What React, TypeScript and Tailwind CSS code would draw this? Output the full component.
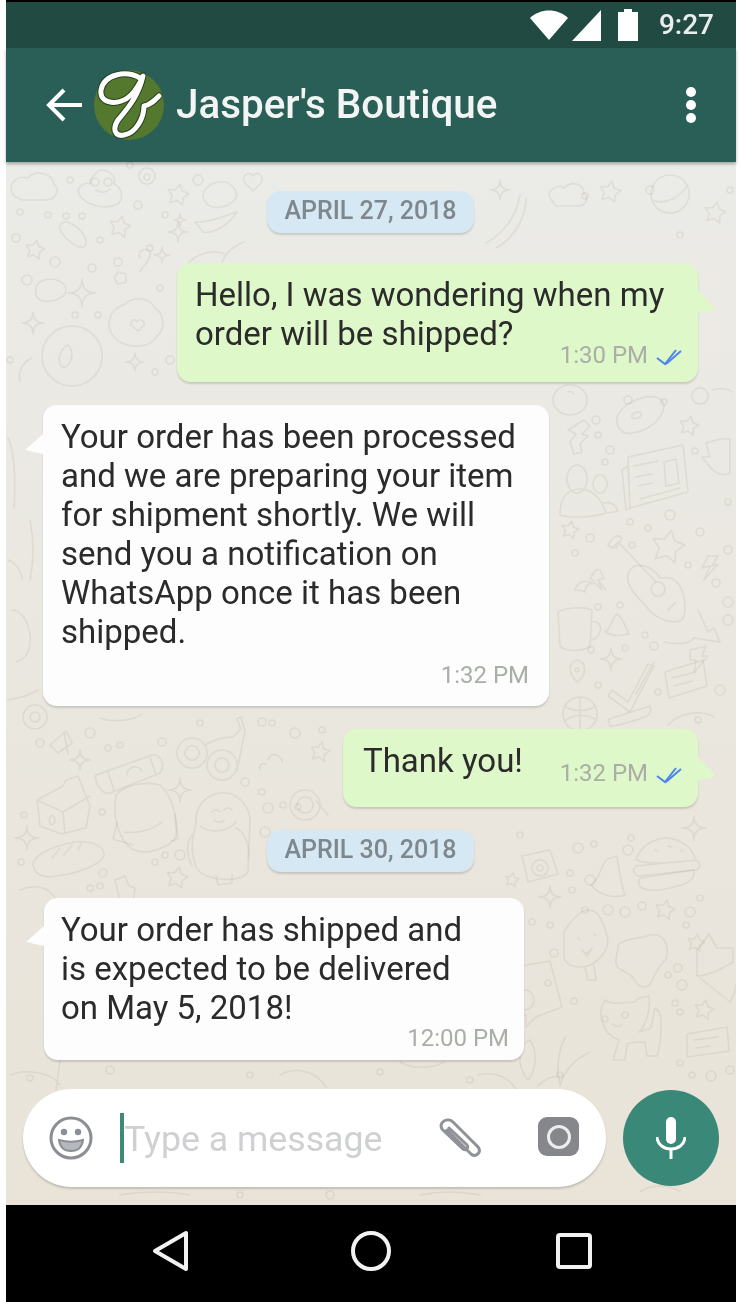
import React from "react";

const roboto = { fontFamily: "Roboto, sans-serif" };

// five pointed doodle star
const star = (cx: number, cy: number, r: number) => {
  let d = "";
  for (let i = 0; i < 10; i++) {
    const rad = i % 2 === 0 ? r : r * 0.52;
    const a = (Math.PI / 5) * i - Math.PI / 2 + 0.2;
    d += `${i === 0 ? "M" : "L"}${(cx + rad * Math.cos(a)).toFixed(1)} ${(cy + rad * Math.sin(a)).toFixed(1)}`;
  }
  return d + "z";
};

// four pointed sparkle
const sparkle = (x: number, y: number, r: number) =>
  `M${x} ${y - r}Q${x} ${y} ${x + r} ${y}Q${x} ${y} ${x} ${y + r}Q${x} ${y} ${x - r} ${y}Q${x} ${y} ${x} ${y - r}z`;

const stars: number[][] = [
  [178, 195, 11], [120, 227, 11], [35, 250, 10], [610, 192, 11], [715, 213, 11], [689, 426, 10], [668, 547, 17],
  [570, 530, 9], [320, 752, 10], [177, 878, 11], [665, 910, 10], [696, 943, 9], [704, 1010, 10], [512, 880, 7],
];

const sparkles: number[][] = [
  [178, 232, 10], [162, 255, 8], [82, 293, 14], [33, 323, 11], [135, 362, 9], [500, 190, 10], [611, 659, 11],
  [80, 760, 10], [180, 790, 12], [27, 838, 12], [550, 897, 11], [694, 828, 12], [180, 220, 6],
];

const dots: number[][] = [
  [70, 180, 3], [130, 165, 3], [198, 180, 5], [20, 212, 3], [48, 215, 3], [66, 216, 3], [16, 238, 4], [82, 216, 3],
  [138, 205, 4], [165, 215, 3], [100, 240, 3], [118, 262, 4], [55, 262, 5], [92, 268, 4], [150, 248, 3], [160, 288, 3],
  [27, 280, 5], [75, 315, 3], [98, 315, 3], [170, 360, 4], [155, 372, 3], [10, 360, 3],
  [585, 196, 3], [650, 190, 4], [680, 235, 3], [730, 190, 3], [628, 400, 4], [664, 402, 3], [598, 435, 3], [605, 462, 3],
  [596, 420, 4], [610, 450, 4], [695, 451, 3], [670, 515, 5], [630, 522, 3], [648, 528, 3], [700, 532, 4], [728, 502, 3],
  [590, 538, 4], [575, 553, 3], [632, 545, 3], [688, 565, 3], [728, 550, 4], [716, 583, 4], [728, 602, 5], [728, 620, 5],
  [620, 605, 3], [598, 607, 3], [645, 635, 3], [625, 648, 3], [654, 646, 4], [591, 650, 3], [598, 685, 3], [658, 692, 3],
  [720, 690, 5], [698, 720, 3], [40, 743, 4], [90, 733, 5], [120, 745, 3], [162, 742, 4], [200, 723, 3], [108, 748, 3],
  [262, 722, 4], [295, 733, 5], [322, 730, 3], [272, 723, 3], [245, 782, 4], [262, 792, 3], [268, 808, 5], [298, 807, 3],
  [283, 805, 3], [265, 832, 5], [24, 815, 3], [102, 812, 3], [165, 855, 3], [155, 862, 3], [103, 873, 4], [21, 862, 3],
  [180, 855, 5], [90, 888, 3], [100, 886, 3], [520, 835, 3], [578, 848, 5], [594, 844, 3], [628, 850, 5], [631, 838, 3],
  [570, 873, 3], [590, 880, 5], [572, 890, 3], [585, 910, 3], [608, 910, 5], [625, 912, 5], [642, 906, 4], [690, 912, 5],
  [686, 925, 3], [700, 898, 3], [532, 922, 3], [550, 925, 3], [554, 953, 4], [548, 983, 3], [678, 968, 4], [668, 975, 3],
  [682, 985, 5], [675, 1003, 3], [680, 1012, 3], [574, 1001, 3], [680, 1063, 3], [692, 1075, 3], [711, 1076, 5], [730, 1070, 4],
  [560, 1075, 3], [30, 1078, 3], [110, 1070, 4], [250, 1075, 3], [380, 1072, 3], [470, 1080, 3], [240, 1195, 3], [330, 1195, 4],
];

const shapes: string[] = [
  // clouds and faces along the top band
  "M14 196c-8-10 2-22 14-18 6-8 24-6 26 6 6 6 2 16-8 16H22z",
  "M80 196c-6-10 6-14 10-12 0-8 8-12 10-14 10 0 16 6 14 14 8 4 10 14 4 20-12 6-30 2-38-8z",
  "M95 178a4 4 0 1 0 .1 0zM108 178a4 4 0 1 0 .1 0zM96 190c4 3 10 3 14-1",
  "M147 168a8 8 0 1 0 .1 0zM147 174a3 3 0 1 0 .1 0z",
  "M204 200c-4-8 6-18 16-18 10-2 18 8 16 16-6 10-26 14-32 2z",
  "M253 176c4-6 12 0 8 7l-8 8-8-8c-4-7 4-13 8-7z",
  "M195 222c10 2 30-6 42-10-8 12-22 22-34 20z",
  "M184 270c6-14 26-22 40-16M222 262c4-10 12-16 22-20",
  "M550 198c-4-8 8-14 14-10 8-8 20-4 20 6 6 6 0 12-6 12h-22z",
  "M670 175a19 19 0 1 0 .1 0zM652 200c14 6 30-4 36-16",
  "M520 195c-4 22-16 38-34 48M526 198c0 20-12 40-30 50",
  // hazard cloud, flower heart, planet on the left
  "M40 282c10-6 26-2 26 8 0 8-16 14-26 10-6-4-6-14 0-18z",
  "M125 304c12-10 26-4 30 4 10 6 10 22 2 28-6 12-30 14-42 2-10-10-8-28 10-34z",
  "M137 322c2-4 8-2 7 3l-6 6-7-6c-1-5 4-7 6-3z",
  "M72 326a30 30 0 1 0 .1 0zM68 345c-8 4-12 16-6 22 8 2 14-14 6-22z",
  "M32 358c-10 4-14 14-12 24",
  "M60 225c6-8 18 2 24 10 4 8 2 14-4 12-8-2-22-14-20-22z",
  "M140 258c-4-6 6-12 10-6 2 8-8 14-10 20M118 272l8 2 0 8-8 2-4-6z",
  // donut, bubbles on the right
  "M617 423c-2-12 12-22 28-26 14-2 22 4 18 14-4 12-18 20-30 22-8 2-14-2-16-10zM638 412a5 3 -20 1 0 .1 0z",
  "M570 385a17 15 0 1 0 .1 0zM568 392c2-2 4 0 6 2",
  "M568 430l16-10 6 6-8 8 6 2-8 8 2 8-8 2-4-12 6-8z",
  "M712 390c6-2 16-2 20 2M700 388a8 8 0 1 0 .1 0z",
  // newspaper
  "M628 457l55-12 5 47-58 16zM622 470l6-4 2 42-4 2z",
  "M634 466l24-5M636 477l16-3M638 486l14-3M640 499l40-11M664 462l12-3 3 24-13 3z",
  // pair of balloon people, guitar
  "M577 465a10 14 0 1 0 .1 0zM560 515c0-18 8-26 20-26 12 0 22 10 26 24-12 4-34 6-46 2zM600 475a7 9 0 1 0 .1 0zM604 503c6-2 12 2 14 8l-10 2",
  "M706 443l14-4 10 0 0 34c-8 4-14 0-20-6l-8-10 8 0z",
  "M612 548l6-6 38 40M608 546c2-6 8-14 14-8l-6 10z",
  "M630 570c8-10 24-2 30 8 10-2 18 2 22 12 4 12 4 24 0 30-12 6-30-4-36-14-10-10-24-24-16-36zM658 582a7 7 0 1 0 .1 0zM668 610l8-8",
  "M698 610l10 22 6-4 6 14-26-4c-6 8-20 6-30 4",
  "M708 556l-6 12 8-2-6 14 14-16-6 2 6-10z",
  "M596 570l-6 8 12 12-4-10 6-2-4-8zM598 580l8 10",
  // mug, bell, crescent, pin, basketball, check marks, card
  "M558 612c6-4 26-6 34-2l-2 36c-8 6-24 6-30 0zM592 622c6-2 10 4 8 10-2 6-6 8-10 8",
  "M575 590c2-8 12-12 18-6-4-2-8 2-8 8-4-2-8-2-10-2z",
  "M605 632c6-2 6-14 12-18 6 4 8 12 12 20-8 2-18 2-24-2z",
  "M577 660c-8 2-10 12 0 22 10-6 10-20 0-22zM577 668a2 2 0 1 0 .1 0z",
  "M580 697a17 17 0 1 0 .1 0zM564 706c10 6 22 6 32 0M580 697v34M566 720c8-6 22-6 30 0",
  "M612 690l16 12 20-38 6 2-24 46-22-16zM636 694l18-32",
  "M665 672l38-12 4 26-38 12zM672 678l24-6M674 686l18-5",
  "M690 650l16-4-4 10 6 0-14 16 2-12-6 0zM608 720c8-4 30-10 42-14 2 8-2 10-8 12-12 4-24 8-32 8z",
  "M668 725c10-12 34-16 46-8",
  // lower left scene: gear, scissors, glasses, carton, backpack, astronaut, bread
  "M35 705a12 12 0 1 0 .1 0zM35 712a5 5 0 1 0 .1 0z",
  "M50 745l16-14 6 12-14 10zM64 732l4 22",
  "M100 718c10 4 32 4 42-4",
  "M192 738a15 15 0 1 0 .1 0zM192 746a7 7 0 1 0 .1 0zM222 750a15 15 0 1 0 .1 0zM222 758a7 7 0 1 0 .1 0zM205 745c10-6 20-8 28-8l8-8-4-10 4-2 4 14-8 40",
  "M37 800l26-14 3-6 12-4 12 30-4 22-24 6-22-8zM37 800l26 12 27-16M63 812l2 22M52 815c-3 3-4 8 0 10 5-2 3-8 0-10z",
  "M96 775l56-20c8-2 14 10 8 18l-50 20c-8 2-16-10-14-18zM108 772l6 18M150 757l6 18",
  "M116 795c8-10 30-14 44-10 12 10 18 34 16 52-6 10-30 20-44 12-14-10-20-34-16-54z",
  "M124 832c12 2 28-2 38-10M133 845l-20-6 4-16M175 815l3 24-6 2M127 775a8 8 0 0 1 15-4",
  "M220 793c16-2 30 12 30 28l-2 50c-4 12-44 12-52-4-6-16-4-30 0-42-2-16 8-30 24-32z",
  "M200 826c10 8 28 6 36-4M212 812c3-3 6-3 8 0M224 810c3-3 6-3 8 0M214 820c3 3 8 3 10 0",
  "M216 875l2 10 14-2 0-8M192 835c-6 8-6 20 0 30M236 828c10 4 14 20 12 30",
  "M34 868c-6-12 20-22 40-26 16-2 32 4 30 14-4 10-30 18-48 20-10 2-20 0-22-8zM52 858l8-10M64 855l8-10M78 850l4-8",
  "M268 760c4-10 14-4 14 2M260 770c-2-4 2-8 6-6M305 790a15 15 0 1 0 .1 0zM305 797a8 8 0 1 0 .1 0zM316 801l12 14",
  "M115 880l10-4 4 10 6 2-2 14-12 2zM20 890c14-6 30-4 36 10",
  // lower right: camera, bell, burger, popsicle, blob, cat, cupcake, plant
  "M522 856l28-6 8 24-30 8zM540 860a8 8 0 1 0 .1 0zM540 865a3 3 0 1 0 .1 0z",
  "M591 885c8-4 10-20 16-26 6 0 6-4 10-2 2 10 4 28 8 38-12 4-26 0-34-10z",
  "M636 860c4-14 18-22 32-22 14 2 24 10 28 22-20 2-44 6-60 0zM636 866l60-6c6 4 4 10-2 10l-54 6c-6 0-8-6-4-10z",
  "M640 878l54-8c2 10-8 14-16 16-12 4-28 6-36 2-4-2-4-6-2-10zM655 850l3 1M668 846l3 1M680 850l3 1",
  "M564 932c6-10 16-22 24-22 10 0 14 10 18 22 6 14-4 28-18 34-10 2-20 2-24-8zM585 968l3 12 8 0-2-14M582 950c2 4 8 4 10-2l-5 8z",
  "M578 938l2 2M594 934l2 2",
  "M618 945c8-8 24-6 32-10 14-2 20 10 16 24-6 6-10 12-14 22-6 10-14 6-18-2-4-8-20-8-18-18 0-6 2-8 2-16z",
  "M605 1000c8 6 22 2 30 2 4-6 8-4 14-6 2 16-4 30-10 36 4-2 8-2 12-4l4-20c6 4 6 10 6 16 0 16-2 26-4 32l-10 0-2-14c-8 0-14 0-18 2l-2 16-12 0 6-20c-14-4-24-24-14-40z",
  "M605 1016a3 3 0 1 0 .1 0zM625 1012a3 3 0 1 0 .1 0zM612 1024c3 3 8 3 10 0",
  "M697 950l12-16 8 14 16 0v14c-10 6-26 14-36 14zM700 978l30 24c2-4 6-10 6-18",
  "M687 1034l40-7 2 24-42 6zM694 1040l24-3M696 1048l14-2",
  "M530 1040c-12 4-14 26-2 40 8-8 10-30 2-40zM566 1036c-8 14-10 32-6 48M590 1052c-14 6-26 18-30 34M538 1086c8-8 14-10 24-10",
  "M526 965l24-4 12 46-26 10-10 10 0-12-12 2-2-46zM524 990a10 10 0 1 0 .1 0z",
  "M478 1075c16-4 30 2 38 14M60 1060l-4 30M10 1075c14-6 40-4 50 10M280 1075c14-8 34-6 46 12M400 1062c10 6 30 8 44 0",
  "M640 1192c10-8 30-8 40 0M120 1195c20-4 50-4 70 0M420 1195c20-4 40-4 60 0",
  // left margin
  "M8 438c6 10 8 40 6 70M30 520c4 20 4 40 0 60M12 610c8 0 16 10 18 24 2 14-4 26-14 28",
  "M8 700c12-2 24-6 30-10M8 560c6 2 14 10 14 20",
];

// Doodle wallpaper, coordinates are page pixels so each drawing sits where it does in the shot
const Wallpaper = () => (
  <svg className="absolute inset-0 w-full h-full" viewBox="6 162 730 1043" aria-hidden="true">
    <g fill="none" stroke="#8a8470" strokeOpacity="0.13" strokeWidth="1.6" strokeLinejoin="round" strokeLinecap="round">
      {shapes.map((d, i) => (
        <path key={i} d={d} />
      ))}
      {stars.map(([x, y, r], i) => (
        <path key={i} d={star(x, y, r)} />
      ))}
      {sparkles.map(([x, y, r], i) => (
        <path key={i} d={sparkle(x, y, r)} />
      ))}
      {dots.map(([x, y, r], i) => (
        <circle key={i} cx={x} cy={y} r={r} />
      ))}
    </g>
  </svg>
);

const Ticks = () => (
  <svg width="26" height="19" viewBox="0 0 26 19" fill="none" stroke="#4d86ea" strokeWidth="2" className="ml-[8px] mt-[4px]">
    <path d="M1 10l8 6L20 2" />
    <path d="M10 16L25 3" />
  </svg>
);

const Time = ({ children, ticks, className = "" }: { children: string; ticks?: boolean; className?: string }) => (
  <div className={`flex items-center justify-end h-[26px] ${className}`}>
    <span className="text-[24px] leading-[26px] text-[#a9aea6]">{children}</span>
    {ticks && <Ticks />}
  </div>
);

const TailRight = ({ className }: { className: string }) => (
  <svg width="18" height="24" viewBox="0 0 18 24" className={`absolute left-full ${className}`}>
    <path d="M0 0l17 18-3 3-14 2z" fill="#dff8c9" />
  </svg>
);

const TailLeft = ({ className }: { className: string }) => (
  <svg width="18" height="20" viewBox="0 0 18 20" className={`absolute right-full ${className}`}>
    <path d="M18 0L0 16l18 4z" fill="#fdfdfd" />
  </svg>
);

const DateChip = ({ children, className }: { children: string; className: string }) => (
  <div className={`self-center ml-[-1px] w-[207px] h-[42px] pb-[2px] flex items-center justify-center rounded-[14px] bg-[#d6e8f3] shadow-[0_2px_2px_rgba(0,0,0,0.14)] text-[25px] font-medium text-[#7d878d] ${className}`}>
    {children}
  </div>
);

export default function App() {
  return (
    <div
      style={roboto}
      className="w-[740px] h-[1302px] bg-white pl-[6px] pr-[4px] overflow-hidden blur-[0.7px]"
    >
      <div className="h-full flex flex-col">
        {/* Status bar */}
        <div className="h-[48px] bg-[#204a42] border-t-[2px] border-black flex items-center justify-end pr-[22px] shrink-0">
          <svg width="38" height="30" viewBox="0 0 38 30" className="mr-[4px]">
            <path d="M0 8C10-2 28-2 38 8L19 30z" fill="#fff" />
          </svg>
          <svg width="29" height="31" viewBox="0 0 29 31" className="mr-[17px]">
            <path d="M29 0v31H0z" fill="#fff" />
          </svg>
          <svg width="20" height="32" viewBox="0 0 20 32" className="mr-[21px]">
            <path d="M6 3V0h8v3h6v29H0V3z" fill="#fff" />
          </svg>
          <span className="text-[28px] font-medium text-[#e9eeec]">9:27</span>
        </div>

        {/* App bar */}
        <div className="h-[114px] bg-[#2a5f57] flex items-center pl-[40px] pr-[40px] shrink-0 relative z-10 shadow-[0_2px_3px_rgba(0,0,0,0.3)]">
          <svg width="36" height="34" viewBox="0 0 36 34" fill="none" stroke="#fff" strokeWidth="4" className="mr-[12px]">
            <path d="M36 17H4M18 2L3 17l15 15" />
          </svg>
          <svg width="70" height="70" viewBox="0 0 70 70" className="mr-[12px] shrink-0">
            <circle cx="35" cy="35" r="35" fill="#55782f" />
            <g fill="none" strokeLinecap="round" strokeLinejoin="round">
              <path stroke="#26401a" strokeWidth="7" d="M46 8C32 0 10 4 7 20c-2 15 19 16 30 5 5-5 9-12 12-19C45 24 36 36 24 50c-6 9-3 17 6 15 12-2 20-17 20-29 6-1 10-5 15-10" />
              <path stroke="#fff" strokeWidth="5" d="M46 8C32 0 10 4 7 20c-2 15 19 16 30 5 5-5 9-12 12-19C45 24 36 36 24 50c-6 9-3 17 6 15 12-2 20-17 20-29 6-1 10-5 15-10" />
            </g>
          </svg>
          <span className="text-[40.4px] font-medium text-[#f2f5f4] leading-none">Jasper's Boutique</span>
          <div className="ml-auto flex flex-col gap-[3px]">
            <div className="w-[10px] h-[10px] rounded-full bg-white" />
            <div className="w-[10px] h-[10px] rounded-full bg-white" />
            <div className="w-[10px] h-[10px] rounded-full bg-white" />
          </div>
        </div>

        {/* Chat */}
        <div className="relative flex-1 flex flex-col bg-gradient-to-b from-[#ebebe7] to-[#e9e3d8] min-h-0">
          <Wallpaper />
          <div className="relative flex-1 flex flex-col pt-[29px]">
            <DateChip className="">APRIL 27, 2018</DateChip>

            <div className="relative self-end mr-[38px] mt-[30px] w-[521px] rounded-[14px] bg-[#dff8c9] pl-[18px] pr-[16px] pt-[12px] pb-[14px] shadow-[0_2px_2px_rgba(0,0,0,0.14)]">
              <TailRight className="top-[27px]" />
              <p className="text-[33px] leading-[39px] text-[#2b2b2b] whitespace-nowrap">
                Hello, I was wondering when my
                <br />
                order will be shipped?
              </p>
              <Time ticks className="-mt-[11px]">1:30 PM</Time>
            </div>

            <div className="relative ml-[37px] mt-[23px] w-[506px] rounded-[14px] bg-[#fdfdfd] pl-[18px] pr-[20px] pt-[12px] pb-[18px] shadow-[0_2px_2px_rgba(0,0,0,0.14)]">
              <TailLeft className="top-[29px]" />
              <p className="text-[33px] leading-[39px] text-[#2b2b2b] whitespace-nowrap">
                Your order has been processed
                <br />
                and we are preparing your item
                <br />
                for shipment shortly. We will
                <br />
                send you a notification on
                <br />
                WhatsApp once it has been
                <br />
                shipped.
              </p>
              <Time className="mt-[11px]">1:32 PM</Time>
            </div>

            <div className="relative self-end mr-[38px] mt-[23px] w-[355px] h-[78px] rounded-[14px] bg-[#dff8c9] pl-[20px] pr-[16px] pt-[12px] flex shadow-[0_2px_2px_rgba(0,0,0,0.14)]">
              <TailRight className="top-[28px]" />
              <p className="text-[33px] leading-[39px] text-[#2b2b2b] whitespace-nowrap">Thank you!</p>
              <Time ticks className="ml-auto mt-[19px]">1:32 PM</Time>
            </div>

            <DateChip className="mt-[23px]">APRIL 30, 2018</DateChip>

            <div className="relative ml-[38px] mt-[26px] w-[480px] rounded-[14px] bg-[#fdfdfd] pl-[17px] pr-[15px] pt-[12px] pb-[9px] shadow-[0_2px_2px_rgba(0,0,0,0.14)]">
              <TailLeft className="top-[28px]" />
              <p className="text-[33px] leading-[39px] text-[#2b2b2b] whitespace-nowrap">
                Your order has shipped and
                <br />
                is expected to be delivered
                <br />
                on May 5, 2018!
              </p>
              <Time className="-mt-[2px]">12:00 PM</Time>
            </div>

            {/* Composer */}
            <div className="mt-auto mb-[18px] flex items-center pl-[17px] pr-[11px]">
              <div className="w-[583px] h-[98px] rounded-full bg-white shadow-[0_2px_2px_rgba(0,0,0,0.16)] flex items-center pl-[26px]">
                <svg width="44" height="44" viewBox="0 0 44 44" className="shrink-0">
                  <circle cx="22" cy="22" r="20" fill="none" stroke="#8b8f95" strokeWidth="3" />
                  <circle cx="15" cy="16" r="3.2" fill="#8b8f95" />
                  <circle cx="29" cy="16" r="3.2" fill="#8b8f95" />
                  <path d="M10 24c7 2 17 2 24 0-1 8-6 11-12 11s-11-3-12-11z" fill="#b5b8bc" stroke="#8b8f95" strokeWidth="2" />
                </svg>
                <div className="ml-[27px] w-[4px] h-[50px] bg-[#3d8a78] shrink-0" />
                <span className="text-[35.7px] leading-none text-[#cfd0d2] mt-[3px]">Type a message</span>
                <svg width="46" height="42" viewBox="0 0 46 42" fill="none" stroke="#8f9297" strokeWidth="3" strokeLinecap="round" className="ml-[55px] shrink-0">
                  <path d="M10 13l24 24c5 4 11-2 7-7L16 5C11 0 1 5 5 12l21 20c3 2 6-1 4-4L12 11" />
                </svg>
                <div className="ml-[55px] w-[41px] h-[39px] rounded-[9px] bg-[#85878c] flex items-center justify-center shrink-0 -mt-[3px]">
                  <div className="w-[24px] h-[24px] rounded-full border-[3.5px] border-[#eceded]" />
                </div>
              </div>
              <div className="ml-[17px] w-[96px] h-[96px] rounded-full bg-[#3a8878] flex items-center justify-center shrink-0">
                <svg width="30" height="42" viewBox="0 0 30 42" fill="none" stroke="#fff">
                  <rect x="10" y="0" width="10" height="27" rx="5" fill="#fff" stroke="none" />
                  <path d="M1 20c1 16 27 16 28 0M15 31v11" strokeWidth="3" />
                </svg>
              </div>
            </div>
          </div>
        </div>

        {/* Nav bar */}
        <div className="h-[97px] bg-black flex items-center shrink-0 pl-[144px] pb-[5px]">
          <svg width="42" height="42" viewBox="0 0 42 42" fill="none" stroke="#f2f2f2" strokeWidth="4" strokeLinejoin="round">
            <path d="M36 3v36L5 21z" />
          </svg>
          <svg width="42" height="42" viewBox="0 0 42 42" fill="none" stroke="#f2f2f2" strokeWidth="4" className="ml-[158px]">
            <circle cx="21" cy="21" r="18" />
          </svg>
          <svg width="36" height="36" viewBox="0 0 36 36" fill="none" stroke="#f2f2f2" strokeWidth="4" className="ml-[164px]">
            <rect x="2" y="2" width="32" height="32" rx="2" />
          </svg>
        </div>
      </div>
    </div>
  );
}
